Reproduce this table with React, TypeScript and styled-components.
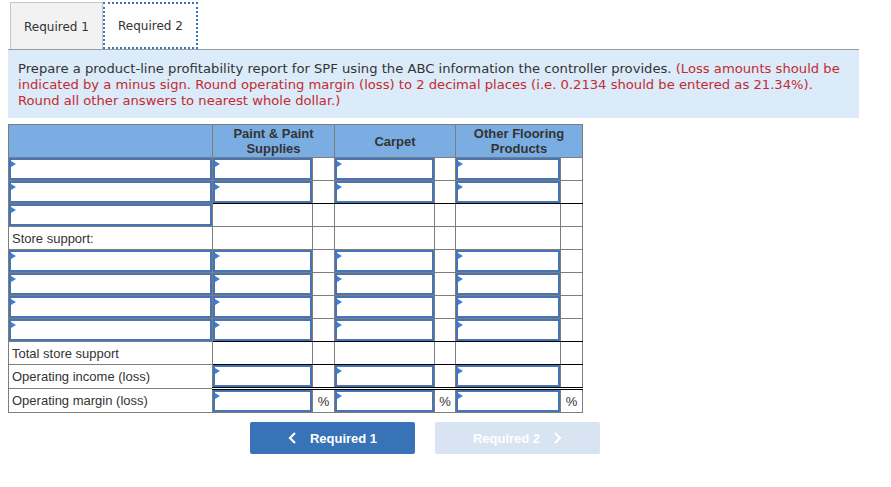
import React, { ReactElement } from 'react'
import styled, { createGlobalStyle } from 'styled-components'

const GlobalStyle = createGlobalStyle`
  html, body { margin: 0; padding: 0; background: #fff; }
`

const Page = styled.div`
  width: 851px;
  padding: 2px 32px 0 8px;
  font-family: 'DejaVu Sans', Verdana, sans-serif;
  color: #333;
`

const TabBar = styled.div`
  display: flex;
  padding-left: 2px;
  border-bottom: 1px solid #9a9a9a;
`

const Tab = styled.div<{ $active?: boolean }>`
  display: flex;
  align-items: center;
  justify-content: center;
  height: 47px;
  padding-top: 1px;
  box-sizing: border-box;
  width: ${p => (p.$active ? '95px' : '93px')};
  font-size: 12px;
  color: #333;
  background: ${p => (p.$active ? '#fff' : '#f2f2f2')};
  border: ${p => (p.$active ? '2px dotted #3a74bd' : '1px solid #c6c6c6')};
  border-bottom: ${p => (p.$active ? '2px dotted #3a74bd' : 'none')};
  margin-bottom: ${p => (p.$active ? '-1px' : '0')};
`

const Instructions = styled.div`
  background: #dbebf9;
  padding: 11px 10px 9px 10px;
  font-size: 13.15px;
  line-height: 16px;
  color: #333;
`

const Note = styled.span`
  color: #c42a30;
`

const Report = styled.table`
  margin-top: 6px;
  border-collapse: collapse;
  table-layout: fixed;
  width: 574px;
  font-family: 'Liberation Sans', Arial, sans-serif;
  font-size: 13px;
  color: #333;
`

const HeadCell = styled.th`
  background: #7aaee3;
  border: 1px solid #7d7d7d;
  height: 32px;
  padding: 0;
  font-weight: bold;
  font-size: 13px;
  line-height: 15px;
  text-align: center;
  color: #333;
`

type Rule = 'none' | 'single' | 'double'

const Cell = styled.td<{ $rule?: Rule }>`
  border: 1px solid #7d7d7d;
  border-bottom: ${p =>
    p.$rule === 'double' ? '3px double #000' : p.$rule === 'single' ? '1px solid #000' : '1px solid #7d7d7d'};
  height: 22px;
  padding: 0;
  vertical-align: middle;
`

const LabelCell = styled(Cell)`
  padding-left: 3px;
  white-space: nowrap;
`

const UnitCell = styled(Cell)`
  text-align: center;
  font-size: 13px;
`

const Field = styled.div`
  position: relative;
  height: 22px;
  box-sizing: border-box;
  border: 2px solid #4775b3;
  background: #fff;

  &::before {
    content: '';
    position: absolute;
    top: 1px;
    left: 0;
    border-left: 5px solid #3d7fd9;
    border-top: 3px solid transparent;
    border-bottom: 3px solid transparent;
  }
`

const Nav = styled.div`
  display: flex;
  gap: 20px;
  margin: 9px 0 0 242px;
`

const NavButton = styled.button<{ $disabled?: boolean }>`
  display: flex;
  align-items: center;
  justify-content: center;
  gap: 13px;
  width: 165px;
  height: 32px;
  border: none;
  border-radius: 2px;
  background: ${p => (p.$disabled ? '#d8e4f1' : '#3873b7')};
  color: #fff;
  font-family: 'Liberation Sans', Arial, sans-serif;
  font-weight: bold;
  font-size: 13px;
  cursor: ${p => (p.$disabled ? 'default' : 'pointer')};
`

function Chevron({ dir }: { dir: 'left' | 'right' }): ReactElement {
  const d = dir === 'left' ? 'M7 1 L2 6 L7 11' : 'M2 1 L7 6 L2 11'
  return (
    <svg width='9' height='12' viewBox='0 0 9 12'>
      <path d={d} fill='none' stroke='#fff' strokeWidth='2.2' />
    </svg>
  )
}

type Row = {
  label?: string
  labelInput?: boolean
  amounts: boolean
  rule: Rule
  unit?: string
}

const rows: Row[] = [
  { labelInput: true, amounts: true, rule: 'none' },
  { labelInput: true, amounts: true, rule: 'single' },
  { labelInput: true, amounts: false, rule: 'none' },
  { label: 'Store support:', amounts: false, rule: 'none' },
  { labelInput: true, amounts: true, rule: 'none' },
  { labelInput: true, amounts: true, rule: 'none' },
  { labelInput: true, amounts: true, rule: 'none' },
  { labelInput: true, amounts: true, rule: 'single' },
  { label: 'Total store support', amounts: false, rule: 'single' },
  { label: 'Operating income (loss)', amounts: true, rule: 'double' },
  { label: 'Operating margin (loss)', amounts: true, rule: 'none', unit: '%' },
]

const products = ['paint', 'carpet', 'other']

export default function App(): ReactElement {
  return (
    <Page>
      <GlobalStyle />
      <TabBar>
        <Tab>Required 1</Tab>
        <Tab $active>Required 2</Tab>
      </TabBar>
      <Instructions>
        Prepare a product-line profitability report for SPF using the ABC information the controller provides.{' '}
        <Note>
          (Loss amounts should be indicated by a minus sign. Round operating margin (loss) to 2 decimal places (i.e.
          0.2134 should be entered as 21.34%). Round all other answers to nearest whole dollar.)
        </Note>
      </Instructions>
      <Report>
        <colgroup>
          <col style={{ width: 204 }} />
          <col style={{ width: 100 }} />
          <col style={{ width: 22 }} />
          <col style={{ width: 100 }} />
          <col style={{ width: 21 }} />
          <col style={{ width: 105 }} />
          <col style={{ width: 22 }} />
        </colgroup>
        <thead>
          <tr>
            <HeadCell />
            <HeadCell colSpan={2}>Paint &amp; Paint<br />Supplies</HeadCell>
            <HeadCell colSpan={2}>Carpet</HeadCell>
            <HeadCell colSpan={2}>Other Flooring<br />Products</HeadCell>
          </tr>
        </thead>
        <tbody>
          {rows.map((row, i) => (
            <tr key={i}>
              {row.labelInput ? (
                <Cell><Field /></Cell>
              ) : (
                <LabelCell>{row.label}</LabelCell>
              )}
              {products.map(p => (
                <React.Fragment key={p}>
                  <Cell $rule={row.rule}>{row.amounts && <Field />}</Cell>
                  <UnitCell $rule={row.rule}>{row.unit}</UnitCell>
                </React.Fragment>
              ))}
            </tr>
          ))}
        </tbody>
      </Report>
      <Nav>
        <NavButton>
          <Chevron dir='left' />
          Required 1
        </NavButton>
        <NavButton $disabled disabled>
          Required 2
          <Chevron dir='right' />
        </NavButton>
      </Nav>
    </Page>
  )
}
